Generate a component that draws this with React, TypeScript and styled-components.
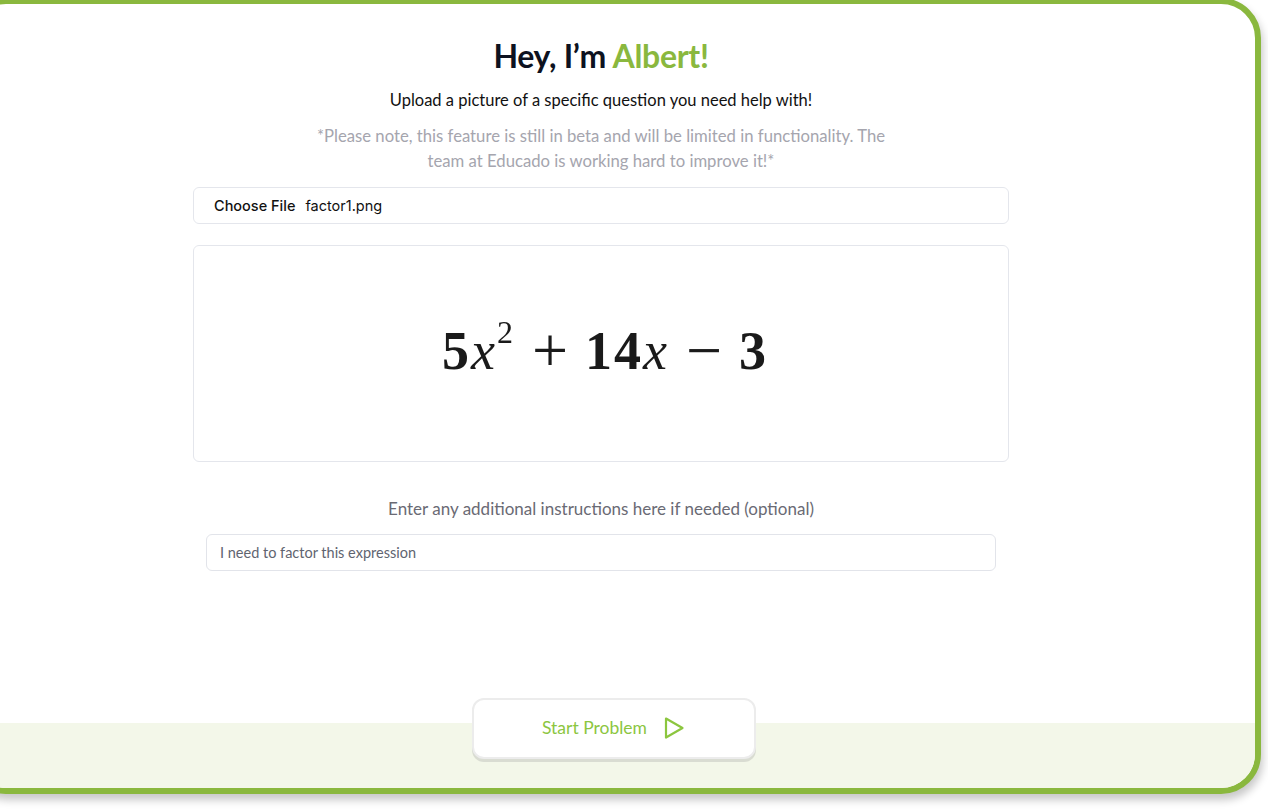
import styled, { createGlobalStyle } from "styled-components"

const Global = createGlobalStyle`
    html, body {
        margin: 0;
        padding: 0;
        background: #ffffff;
        overflow: hidden;
    }
    body {
        font-family: 'Lato', 'Open Sans', sans-serif;
    }
`

const green = '#8ab83e'

const Page = styled.div`
    width: 1268px;
    height: 810px;
    overflow: hidden;
`

const Card = styled.div`
    box-sizing: border-box;
    width: 1295px;
    height: 796px;
    margin-left: -34px;
    margin-top: -2px;
    border: 6px solid ${green};
    border-radius: 40px;
    box-shadow: 2px 6px 8px rgba(0, 0, 0, 0.22);
    background: #ffffff;
    display: flex;
    flex-direction: column;
    overflow: hidden;
`

const Body = styled.div`
    flex: 1;
    display: flex;
    flex-direction: column;
    align-items: center;
    padding-right: 25px;
    padding-top: 34px;
`

const Title = styled.h1`
    margin: 0;
    font-size: 32px;
    font-weight: 700;
    color: #0d1220;
    letter-spacing: -0.3px;
    line-height: 36px;

    span {
        color: ${green};
    }
`

const Subtitle = styled.p`
    margin: 16px 0 0;
    font-size: 16.5px;
    color: #111111;
    line-height: 20px;
`

const Note = styled.p`
    margin: 14px 0 0;
    width: 584px;
    font-size: 16.7px;
    line-height: 25px;
    color: #a5a5ae;
    text-align: center;
`

const Box = styled.div<{ $h: number }>`
    box-sizing: border-box;
    width: 816px;
    height: ${p => p.$h}px;
    border: 1px solid #e4e6ec;
    border-radius: 6px;
    background: #ffffff;
`

const FileRow = styled(Box)`
    margin-top: 13px;
    display: flex;
    align-items: center;
    padding-left: 20px;
    font-family: 'Inter', 'Liberation Sans', sans-serif;
    font-size: 14.5px;
    color: #111111;

    b {
        font-weight: 500;
        margin-right: 10px;
    }
`

const Preview = styled(Box)`
    margin-top: 21px;
    display: flex;
    align-items: center;
    justify-content: center;
`

const Math = styled.div`
    font-family: 'Liberation Serif', 'DejaVu Serif', serif;
    font-size: 54px;
    font-weight: 700;
    color: #1a1a1a;
    filter: blur(0.6px);
    letter-spacing: 2px;
    margin-left: 8px;
    margin-top: -6px;

    i {
        font-weight: 400;
        font-style: italic;
    }

    sup {
        font-size: 32px;
        font-weight: 400;
        vertical-align: 26px;
        line-height: 0;
    }

    .op {
        font-size: 64px;
        font-weight: 400;
        line-height: 0;
        vertical-align: -3px;
        margin: 0 15px 0 17px;
    }
`

const Label = styled.p`
    margin: 36px 0 0;
    font-size: 17px;
    color: #6a6a74;
    line-height: 22px;
`

const Input = styled.input`
    box-sizing: border-box;
    width: 790px;
    height: 37px;
    margin-top: 14px;
    border: 1px solid #e2e4ea;
    border-radius: 6px;
    padding: 0 13px;
    font-family: 'Lato', 'Open Sans', sans-serif;
    font-size: 14.5px;
    color: #5f6470;
    outline: none;
`

const Footer = styled.div`
    height: 65px;
    background: #f3f7e9;
    display: flex;
    justify-content: center;
    flex-shrink: 0;
`

const StartButton = styled.button`
    box-sizing: border-box;
    width: 284px;
    height: 61px;
    margin-top: -25px;
    border: 2px solid #ececec;
    border-radius: 12px;
    background: #ffffff;
    box-shadow: 0 3px 0 #d9dcd2;
    display: flex;
    align-items: center;
    justify-content: center;
    gap: 16px;
    font-family: 'Lato', 'Open Sans', sans-serif;
    font-size: 17.5px;
    color: #8cc63f;
    cursor: pointer;
    padding: 0 0 2px 0;
`

export default function App() {
    return (
        <Page>
            <Global />
            <Card>
                <Body>
                    <Title>Hey, I’m <span>Albert!</span></Title>
                    <Subtitle>Upload a picture of a specific question you need help with!</Subtitle>
                    <Note>
                        *Please note, this feature is still in beta and will be limited in functionality. The team at Educado is working hard to improve it!*
                    </Note>
                    <FileRow $h={37}>
                        <b>Choose File</b>factor1.png
                    </FileRow>
                    <Preview $h={217}>
                        <Math>
                            5<i>x</i><sup>2</sup><span className="op">+</span>14<i>x</i><span className="op">−</span>3
                        </Math>
                    </Preview>
                    <Label>Enter any additional instructions here if needed (optional)</Label>
                    <Input defaultValue="I need to factor this expression" />
                </Body>
                <Footer>
                    <StartButton>
                        Start Problem
                        <svg width="22" height="24" viewBox="0 0 22 24" fill="none">
                            <path d="M3 2.5 L19.5 12 L3 21.5 Z" stroke="#8cc63f" strokeWidth="2.2" strokeLinejoin="round" />
                        </svg>
                    </StartButton>
                </Footer>
            </Card>
        </Page>
    )
}
